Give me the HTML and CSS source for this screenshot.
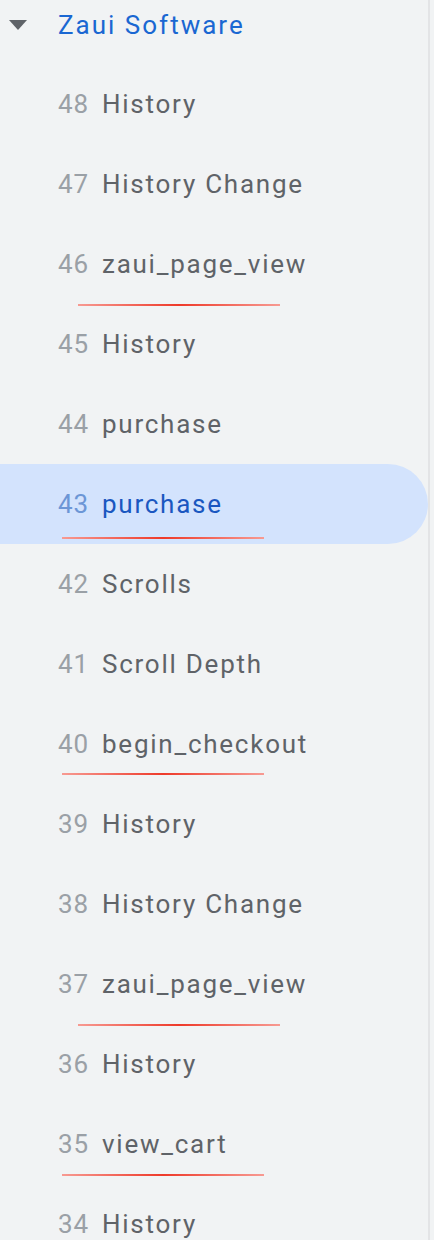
FILE: index.html
```html
<!DOCTYPE html>
<html>
<head>
<meta charset="utf-8">
<link rel="stylesheet" href="styles.css">
</head>
<body>
<div class="panel">
  <div class="tree">
    <div class="folder">
      <svg class="caret" width="18" height="10" viewBox="0 0 18 10"><path d="M0 0 L18 0 L9 10 Z" fill="#5f6368"/></svg>
      <span class="folder-name">Zaui Software</span>
    </div>
    <div class="row"><span class="num">48</span><span class="label">History</span></div>
    <div class="row"><span class="num">47</span><span class="label">History Change</span></div>
    <div class="row"><span class="num">46</span><span class="label">zaui_page_view</span><span class="mark mark-b"></span></div>
    <div class="row"><span class="num">45</span><span class="label">History</span></div>
    <div class="row"><span class="num">44</span><span class="label">purchase</span></div>
    <div class="row active"><span class="num">43</span><span class="label">purchase</span><span class="mark mark-a"></span></div>
    <div class="row"><span class="num">42</span><span class="label">Scrolls</span></div>
    <div class="row"><span class="num">41</span><span class="label">Scroll Depth</span></div>
    <div class="row"><span class="num">40</span><span class="label">begin_checkout</span><span class="mark mark-c"></span></div>
    <div class="row"><span class="num">39</span><span class="label">History</span></div>
    <div class="row"><span class="num">38</span><span class="label">History Change</span></div>
    <div class="row"><span class="num">37</span><span class="label">zaui_page_view</span><span class="mark mark-b"></span></div>
    <div class="row"><span class="num">36</span><span class="label">History</span></div>
    <div class="row"><span class="num">35</span><span class="label">view_cart</span><span class="mark mark-d"></span></div>
    <div class="row"><span class="num">34</span><span class="label">History</span></div>
  </div>
</div>
</body>
</html>
```

FILE: styles.css
```css
html, body {
  margin: 0;
  padding: 0;
  background: #f1f3f4;
}
body {
  width: 434px;
  height: 1240px;
  overflow: hidden;
  font-family: Roboto, "Liberation Sans", sans-serif;
}
.panel {
  width: 428px;
  border-right: 2px solid #e3e4e6;
  margin-top: -16px;
}
.tree {
  display: flex;
  flex-direction: column;
}
.folder {
  height: 80px;
  display: flex;
  align-items: center;
}
.caret {
  margin-left: 9px;
  margin-right: 31px;
  margin-top: 2px;
}
.folder-name {
  color: #1a67d2;
  font-size: 26px;
  letter-spacing: 2px;
  padding-top: 1px;
}
.row {
  position: relative;
  height: 80px;
  display: flex;
  align-items: center;
  padding-left: 58px;
  font-size: 26px;
  letter-spacing: 1.75px;
}
.num {
  color: #9aa0a6;
  width: 44px;
  letter-spacing: 1px;
}
.label {
  color: #5f6368;
}
.row.active {
  background: #d3e3fd;
  border-radius: 0 40px 40px 0;
}
.row.active .num {
  color: #6c96d6;
}
.row.active .label {
  color: #1a57c0;
}
.mark {
  position: absolute;
  height: 2px;
  background: linear-gradient(90deg, #f79a92, #ee3a2a 50%, #f79a92);
}
.mark-a { left: 62px; width: 202px; top: 73px; }
.mark-b { left: 78px; width: 202px; top: 80px; }
.mark-c { left: 62px; width: 202px; top: 69px; }
.mark-d { left: 62px; width: 202px; top: 70px; }
```
